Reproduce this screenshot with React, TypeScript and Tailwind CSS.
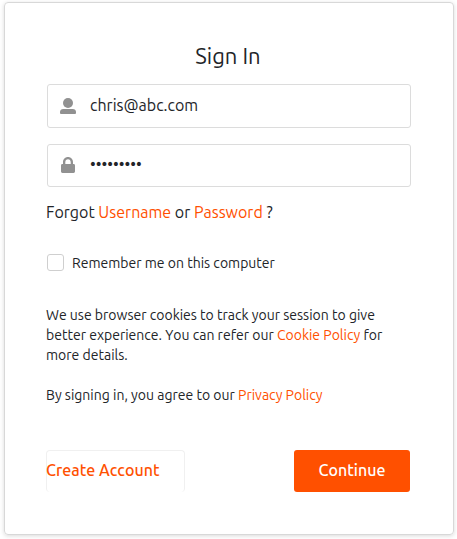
import { useState } from "react";

function UserIcon() {
  return (
    <svg aria-hidden="true" viewBox="0 0 16 16" className="h-4 w-4 shrink-0 fill-[#919191]">
      <circle cx="8" cy="5" r="5" />
      <path d="M0 15V14C0 12.2 1.4 11 3.2 11H12.8C14.6 11 16 12.2 16 14V15Q16 16 15 16H1Q0 16 0 15Z" />
    </svg>
  );
}

function LockIcon() {
  return (
    <svg aria-hidden="true" viewBox="0 0 16 16" className="mb-px h-4 w-4 shrink-0 fill-[#919191]">
      <path d="M3 7V5.1C3 2.2 5.2 0 8 0S13 2.2 13 5.1V7H13.6Q15 7 15 8.4V14.6Q15 16 13.6 16H2.4Q1 16 1 14.6V8.4Q1 7 2.4 7ZM5.3 7H10.7V5.2C10.7 3.5 9.6 2.3 8 2.3S5.3 3.5 5.3 5.2Z" />
    </svg>
  );
}

const field =
  "mx-px flex items-center gap-3.5 rounded-[3px] border border-[#dcdcdc] px-3 focus-within:border-[#ff5000]";
const link = "text-[#ff5000] hover:underline";

export default function App() {
  const [username, setUsername] = useState("chris@abc.com");
  const [password, setPassword] = useState("password1");
  const [remember, setRemember] = useState(false);

  return (
    <main className="bg-white pt-0.5 pr-[3px] pb-1 pl-1 font-['Ubuntu','Noto_Sans',sans-serif] text-[#222428] [font-kerning:none]">
      <form
        onSubmit={(e) => e.preventDefault()}
        className="rounded border border-[#d8d8d8] px-[41px] pt-[39px] pb-[42px] shadow-[0_1px_4px_rgba(0,0,0,0.15)]"
      >
        <h1 className="pr-0.5 text-center text-[22px] leading-7">Sign In</h1>

        <div className={`${field} mt-3.5 h-11`}>
          <UserIcon />
          <input
            aria-label="Username"
            type="text"
            value={username}
            onChange={(e) => setUsername(e.target.value)}
            className="min-w-0 flex-1 bg-transparent pb-0.5 text-base leading-6 outline-none"
          />
        </div>
        <div className={`${field} mt-4 h-[43px]`}>
          <LockIcon />
          <input
            aria-label="Password"
            type="password"
            value={password}
            onChange={(e) => setPassword(e.target.value)}
            className="min-w-0 flex-1 bg-transparent pb-1 text-base leading-6 outline-none"
          />
        </div>

        <p className="mt-[13px] text-base leading-6">
          Forgot <a href="#username" className={link}>Username</a> or{" "}
          <a href="#password" className={link}>Password</a> ?
        </p>

        <label className="mt-7 flex items-center gap-2 px-px text-sm leading-[22px]">
          <input
            type="checkbox"
            checked={remember}
            onChange={(e) => setRemember(e.target.checked)}
            className="mb-px h-[17px] w-[17px] appearance-none rounded-[3px] border border-[#cfcfcf] bg-white checked:border-[#ff5000] checked:bg-[#ff5000]"
          />
          Remember me on this computer
        </label>

        <p className="mt-[31px] text-sm leading-5">
          We use browser cookies to track your session to give better experience. You can refer our{" "}
          <a href="#cookies" className={link}>Cookie Policy</a> for more details.
        </p>
        <p className="mt-5 text-sm leading-5">
          By signing in, you agree to our <a href="#privacy" className={link}>Privacy Policy</a>
        </p>

        <div className="mt-[45px] flex items-center justify-between pr-0.5">
          <button
            type="button"
            className="h-[42px] w-[139px] rounded border border-b-0 border-[#f0f0f0] pb-[3px] text-left text-base font-medium text-[#ff5000]"
          >
            <span className="-ml-px">Create Account</span>
          </button>
          <button
            type="submit"
            className="h-[42px] w-[116px] rounded-[3px] bg-[#ff5000] pb-0.5 text-base font-medium text-white"
          >
            Continue
          </button>
        </div>
      </form>
    </main>
  );
}
